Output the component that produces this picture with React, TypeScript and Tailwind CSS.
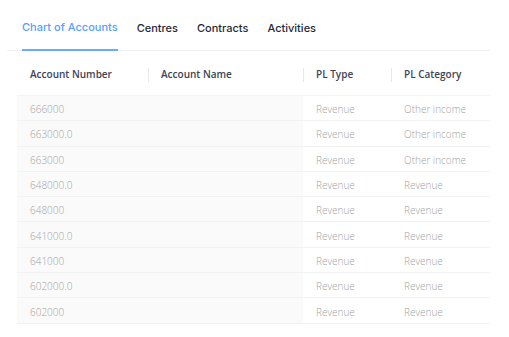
import React from 'react';

const rows = [
  { num: '666000', type: 'Revenue', cat: 'Other income' },
  { num: '663000.0', type: 'Revenue', cat: 'Other income' },
  { num: '663000', type: 'Revenue', cat: 'Other income' },
  { num: '648000.0', type: 'Revenue', cat: 'Revenue' },
  { num: '648000', type: 'Revenue', cat: 'Revenue' },
  { num: '641000.0', type: 'Revenue', cat: 'Revenue' },
  { num: '641000', type: 'Revenue', cat: 'Revenue' },
  { num: '602000.0', type: 'Revenue', cat: 'Revenue' },
  { num: '602000', type: 'Revenue', cat: 'Revenue' },
];

const tabs = ['Chart of Accounts', 'Centres', 'Contracts', 'Activities'];

function HeaderCell({ label, sep }: { label: string; sep?: boolean }) {
  return (
    <div className="relative flex items-center h-full pl-[13px] pt-[2px]">
      {sep && <span className="absolute left-0 top-[17px] h-[14px] w-px bg-[#e5e7eb]" />}
      <span>{label}</span>
    </div>
  );
}

export default function App() {
  return (
    <div className="w-[509px] h-[337px] bg-white pl-[7px] font-['Inter',sans-serif]">
      <div className="w-[483px] flex gap-[19px] pl-[15px] border-b border-[#eef0f3] h-[51px] text-[11px] font-medium">
        {tabs.map((t, i) => (
          <div
            key={t}
            className={
              i === 0
                ? 'flex items-center text-[#5aa0fa] border-b-2 border-[#6aaaff] -mb-px pt-[6px]'
                : 'flex items-center text-[#1f2937] pt-[6px]'
            }
          >
            {t}
          </div>
        ))}
      </div>

      <div className="ml-[10px] w-[473px] font-['Open_Sans',sans-serif]">
        <div className="grid grid-cols-[131px_155px_88px_99px] h-[45px] text-[10px] font-semibold text-[#3d4455] border-b border-[#f3f4f6]">
          <HeaderCell label="Account Number" />
          <HeaderCell label="Account Name" sep />
          <HeaderCell label="PL Type" sep />
          <HeaderCell label="PL Category" sep />
        </div>
        {rows.map((r) => (
          <div
            key={r.num}
            className="grid grid-cols-[131px_155px_88px_99px] h-[25.3px] text-[10px] font-light text-[#a3a3a3] border-b border-[#f2f2f2]"
          >
            <div className="flex items-center pl-[13px] pt-[3px] bg-[#fafafa]">{r.num}</div>
            <div className="bg-[#fafafa]" />
            <div className="flex items-center pl-[13px] pt-[3px]">{r.type}</div>
            <div className="flex items-center pl-[13px] pt-[3px]">{r.cat}</div>
          </div>
        ))}
      </div>
    </div>
  );
}
